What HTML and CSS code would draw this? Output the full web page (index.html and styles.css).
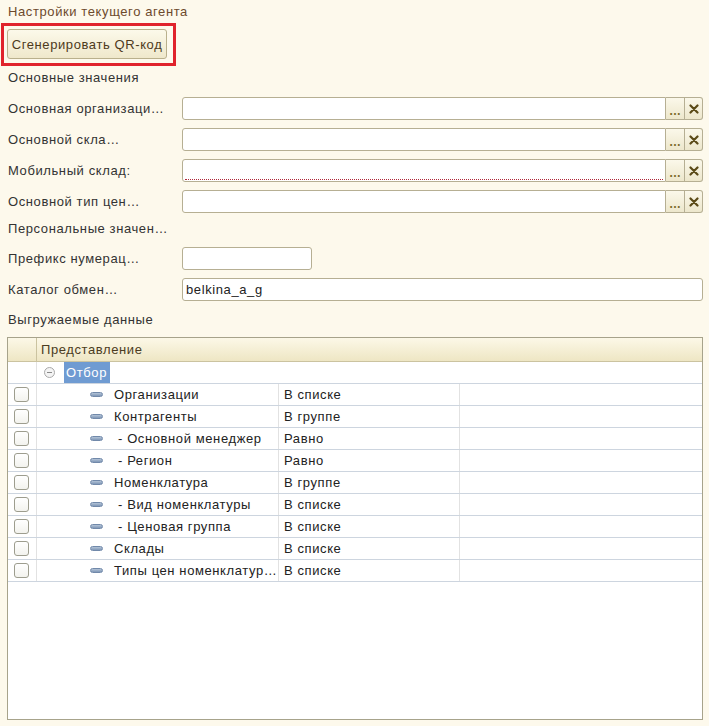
FILE: index.html
```html
<!DOCTYPE html>
<html lang="ru">
<head>
<meta charset="utf-8">
<title>Настройки текущего агента</title>
<link rel="stylesheet" href="styles.css">
</head>
<body>
<div class="page">
  <div class="title">Настройки текущего агента</div>
  <div class="highlight">
    <button class="btn">Сгенерировать QR-код</button>
  </div>
  <div class="group g1">Основные значения</div>

  <div class="fields">
    <div class="row">
      <div class="label">Основная организаци…</div>
      <div class="field"><div class="input"></div><div class="fbtn dots">…</div><div class="fbtn clear"><svg viewBox="0 0 10 10" width="10" height="10"><path d="M1.5 1.5L8.5 8.5M8.5 1.5L1.5 8.5" stroke="#5b4a17" stroke-width="2.2" stroke-linecap="round"/></svg></div></div>
    </div>
    <div class="row">
      <div class="label">Основной скла…</div>
      <div class="field"><div class="input"></div><div class="fbtn dots">…</div><div class="fbtn clear"><svg viewBox="0 0 10 10" width="10" height="10"><path d="M1.5 1.5L8.5 8.5M8.5 1.5L1.5 8.5" stroke="#5b4a17" stroke-width="2.2" stroke-linecap="round"/></svg></div></div>
    </div>
    <div class="row">
      <div class="label">Мобильный склад:</div>
      <div class="field"><div class="input required"></div><div class="fbtn dots">…</div><div class="fbtn clear"><svg viewBox="0 0 10 10" width="10" height="10"><path d="M1.5 1.5L8.5 8.5M8.5 1.5L1.5 8.5" stroke="#5b4a17" stroke-width="2.2" stroke-linecap="round"/></svg></div></div>
    </div>
    <div class="row">
      <div class="label">Основной тип цен…</div>
      <div class="field"><div class="input"></div><div class="fbtn dots">…</div><div class="fbtn clear"><svg viewBox="0 0 10 10" width="10" height="10"><path d="M1.5 1.5L8.5 8.5M8.5 1.5L1.5 8.5" stroke="#5b4a17" stroke-width="2.2" stroke-linecap="round"/></svg></div></div>
    </div>
  </div>

  <div class="group g2">Персональные значен…</div>

  <div class="fields2">
    <div class="row">
      <div class="label">Префикс нумерац…</div>
      <div class="input short"></div>
    </div>
    <div class="row">
      <div class="label">Каталог обмен…</div>
      <div class="input full">belkina_a_g</div>
    </div>
  </div>

  <div class="group g3">Выгружаемые данные</div>

  <div class="table">
    <div class="thead">
      <div class="hcell c1"></div>
      <div class="hcell">Представление</div>
    </div>
    <div class="trow root">
      <div class="cell c1"></div>
      <div class="cell rootcell"><span class="collapse"></span><span class="sel">Отбор</span></div>
    </div>
    <div class="trow item"><div class="cell c1"><span class="cb"></span></div><div class="cell name"><span class="pill"></span><span>Организации</span></div><div class="cell cond">В списке</div><div class="cell"></div></div>
    <div class="trow item"><div class="cell c1"><span class="cb"></span></div><div class="cell name"><span class="pill"></span><span>Контрагенты</span></div><div class="cell cond">В группе</div><div class="cell"></div></div>
    <div class="trow item"><div class="cell c1"><span class="cb"></span></div><div class="cell name"><span class="pill"></span><span class="sub">- Основной менеджер</span></div><div class="cell cond">Равно</div><div class="cell"></div></div>
    <div class="trow item"><div class="cell c1"><span class="cb"></span></div><div class="cell name"><span class="pill"></span><span class="sub">- Регион</span></div><div class="cell cond">Равно</div><div class="cell"></div></div>
    <div class="trow item"><div class="cell c1"><span class="cb"></span></div><div class="cell name"><span class="pill"></span><span>Номенклатура</span></div><div class="cell cond">В группе</div><div class="cell"></div></div>
    <div class="trow item"><div class="cell c1"><span class="cb"></span></div><div class="cell name"><span class="pill"></span><span class="sub">- Вид номенклатуры</span></div><div class="cell cond">В списке</div><div class="cell"></div></div>
    <div class="trow item"><div class="cell c1"><span class="cb"></span></div><div class="cell name"><span class="pill"></span><span class="sub">- Ценовая группа</span></div><div class="cell cond">В списке</div><div class="cell"></div></div>
    <div class="trow item"><div class="cell c1"><span class="cb"></span></div><div class="cell name"><span class="pill"></span><span>Склады</span></div><div class="cell cond">В списке</div><div class="cell"></div></div>
    <div class="trow item"><div class="cell c1"><span class="cb"></span></div><div class="cell name"><span class="pill"></span><span>Типы цен номенклатур…</span></div><div class="cell cond">В списке</div><div class="cell"></div></div>
    <div class="tfill"></div>
  </div>
</div>
</body>
</html>
```

FILE: styles.css
```css
* { box-sizing: border-box; }
html, body {
  margin: 0;
  padding: 0;
  background: #fdf9ec;
}
body {
  font-family: "Liberation Sans", Arial, sans-serif;
  font-size: 13px;
  letter-spacing: 0.6px;
  color: #333333;
}
.page {
  padding: 0 6px 0 8px;
  display: flex;
  flex-direction: column;
  height: 726px;
}
.title {
  margin-top: 4px;
  height: 16px;
  line-height: 16px;
  color: #6d4a2c;
}
.highlight {
  margin-top: 3px;
  margin-left: -7px;
  width: 175px;
  height: 43px;
  border: 3px solid #e0232c;
  padding: 3px 0 0 3px;
}
.btn {
  display: block;
  width: 160px;
  height: 30px;
  padding: 0;
  border: 1px solid #b9b08c;
  border-radius: 3px;
  background: linear-gradient(#fcf9ea, #efe8cb);
  font-family: inherit;
  font-size: 13px;
  letter-spacing: 0.6px;
  color: #4d3a1c;
}
.group {
  height: 16px;
  line-height: 16px;
  white-space: nowrap;
}
.g1 { margin-top: 4px; }
.g2 { margin-top: 8px; }
.g3 { margin-top: 11px; }

.fields {
  margin-top: 11px;
  display: flex;
  flex-direction: column;
  gap: 8px;
}
.fields2 {
  margin-top: 10px;
  display: flex;
  flex-direction: column;
  gap: 8px;
}
.row {
  display: flex;
  align-items: center;
  height: 23px;
}
.label {
  width: 174px;
  flex: none;
  white-space: nowrap;
  overflow: hidden;
}
.field {
  flex: 1;
  display: flex;
  height: 23px;
}
.input {
  height: 23px;
  background: #ffffff;
  border: 1px solid #b6af93;
  border-radius: 3px;
  padding: 0 3px;
  line-height: 21px;
  color: #222;
}
.field .input {
  flex: 1;
  border-radius: 3px 0 0 3px;
  position: relative;
}
.input.required::after {
  content: "";
  position: absolute;
  left: 2px;
  right: 2px;
  bottom: 1px;
  border-bottom: 1px dotted #b0283a;
}
.fbtn {
  flex: none;
  height: 23px;
  border: 1px solid #b6af93;
  border-left: none;
  background: linear-gradient(#fbf8ea, #ede7cc);
  display: flex;
  align-items: center;
  justify-content: center;
  letter-spacing: 0;
}
.dots {
  width: 19px;
  color: #7a6a2a;
  font-weight: bold;
  font-size: 12px;
  align-items: flex-end;
  padding-bottom: 2px;
  line-height: 12px;
}
.clear {
  width: 18px;
  border-radius: 0 3px 3px 0;
}
.short { width: 130px; }
.full { flex: 1; }

.table {
  margin-top: 9px;
  margin-left: -1px;
  margin-bottom: 6px;
  flex: 1;
  display: flex;
  flex-direction: column;
  background: #ffffff;
  border: 1px solid #a7a38b;
}
.thead {
  display: grid;
  grid-template-columns: 29px 1fr;
  height: 24px;
  background: linear-gradient(#fcf8e7, #eee6c4);
  border-bottom: 1px solid #cbc3a0;
  color: #4b3c22;
}
.hcell {
  line-height: 23px;
  padding-left: 4px;
}
.hcell.c1 { border-right: 1px solid #cbc3a0; }
.trow {
  display: grid;
  height: 22px;
  border-bottom: 1px solid #cdd5df;
}
.trow.root { grid-template-columns: 29px 1fr; }
.trow.item { grid-template-columns: 29px 242px 181px 1fr; }
.cell {
  display: flex;
  align-items: center;
  white-space: nowrap;
  overflow: hidden;
  color: #222;
}
.cell.c1 {
  border-right: 1px solid #e2e2e2;
  justify-content: center;
  padding-right: 2px;
}
.item .name, .item .cond { border-right: 1px solid #e2e2e2; }
.cond { padding-left: 5px; }
.rootcell { padding-left: 7px; }
.collapse {
  width: 11px;
  height: 11px;
  border: 1px solid #a9a9a9;
  border-radius: 50%;
  position: relative;
  margin-right: 9px;
  background: #f4f4f4;
}
.collapse::after {
  content: "";
  position: absolute;
  left: 2px;
  right: 2px;
  top: 4px;
  height: 1px;
  background: #8a8a8a;
}
.sel {
  background: #6f9bd2;
  color: #ffffff;
  height: 21px;
  line-height: 21px;
  padding: 0 3px 0 2px;
}
.cb {
  width: 15px;
  height: 15px;
  border: 1px solid #9d9d8e;
  border-radius: 3px;
  background: linear-gradient(#ffffff, #f3f3ee);
}
.name { padding-left: 53px; }
.pill {
  flex: none;
  width: 13px;
  height: 5px;
  border-radius: 3px;
  background: linear-gradient(#b3c3d7, #7f97b6);
  border: 1px solid #7189aa;
  margin-right: 11px;
}
.sub { padding-left: 4px; }
.tfill { flex: 1; }
```
